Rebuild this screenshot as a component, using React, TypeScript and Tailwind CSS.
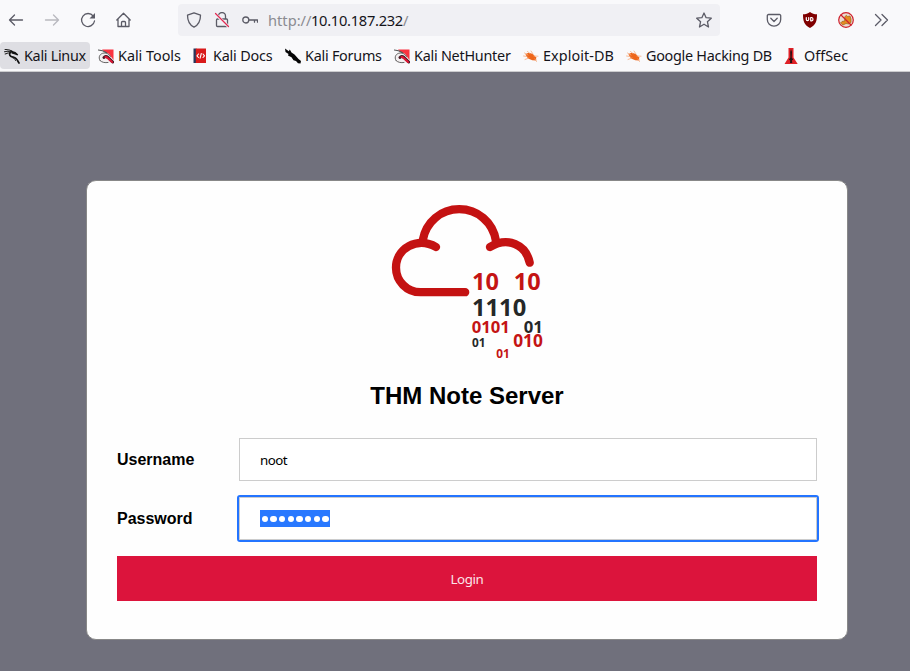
import React from "react";

const stroke = { fill: "none", stroke: "#5b5b66", strokeWidth: 1.3, strokeLinecap: "round", strokeLinejoin: "round" } as const;

function Icon({ children, className = "" }: { children: React.ReactNode; className?: string }) {
  return (
    <svg viewBox="0 0 16 16" className={`size-4 shrink-0 ${className}`} {...stroke}>
      {children}
    </svg>
  );
}

function DragonIcon() {
  return (
    <Icon>
      <path d="M1 1.500C4 1.200 6 1.800 8 3.300M.5 3.800C3 3 5 3.200 6.500 4M1.200 6c2-.8 3.500-1.200 5-1.200" stroke="#222" strokeWidth="1.1" />
      <path d="M7.500 3.500C5 5 5.200 7 6.800 8.200c1.700 1.200 4.200.8 5.700 2.800 1 1.200 1.500 2.500 2.500 4" stroke="#111" strokeWidth="1.700" />
      <path d="M9 10c1.500.3 2.200 1.200 2.500 2.500" stroke="#222" strokeWidth="1" />
      <path d="M7.500 2.800 11.500 4l2.700 2.500-.7 1L11 6.500 7.500 5.500Z" fill="#111" stroke="none" />
    </Icon>
  );
}

function ToolsIcon() {
  return (
    <Icon>
      <path d="M4 1.500h11.500V12L8 5Z" fill="#fa3340" stroke="none" />
      <path d="M1 8C3 4 8 3.500 11 6l4 5.500V15L4 15 1 12Z" fill="#f4f0f1" stroke="none" />
      <path d="M.3 2C3 2 6 3 8.500 4.800" stroke="#555" strokeWidth="1.100" />
      <path d="M2 12.500C-.2 9 2 5.500 6 5c3-.4 5 1.200 6.500 3.500M2 12.500c2 2 5 2.500 8 2" stroke="#555" strokeWidth=".9" />
      <path d="M6 9.500c1-1.500 2.500-1.200 4 0l4.700 4.500" stroke="#4a1824" strokeWidth="3" />
      <path d="M7.500 9c1 0 1.600.4 2.200 1l4.300 4" stroke="#df1735" strokeWidth="2" />
    </Icon>
  );
}

function DocsIcon() {
  return (
    <Icon>
      <path d="M.500.500h3v14.500h-3Z" fill="#26375d" stroke="none" />
      <path d="M2.800.5H13V15H2.800Z" fill="#d91b1b" stroke="none" />
      <path d="m5.500 6-1.500 1.800 1.500 1.700M10 6l1.500 1.800L10 9.500M8.300 5.500l-1.200 4.700" stroke="#fff" strokeWidth="1.100" />
    </Icon>
  );
}

function ForumsIcon() {
  return (
    <Icon>
      <path d="M0 .5 3.800 3.200 4.800 1.500 6.500 4.500 9.500 6.500 13.500 11l2.500 2-.5 2.500-2.500-.2-2-2.300-2.500-.8-2-3L3 7.500 3.500 6 .5 4Z" fill="#050505" stroke="none" />
    </Icon>
  );
}

function BugIcon() {
  return (
    <Icon>
      <path d="M2.500 6.500C4 4.500 7 4.500 10 6.200l3 3 .3 3.300-4-.2L5 10.500Z" fill="#ee6519" stroke="none" />
      <path d="M1.500 5 5 7M4.500 3.500 7 5.500M8 3l2 3M.5 8 4 8.500M2 11.500l4-1.500M11 8l4 .2M12 11l1.500 2.500" stroke="#f5ab7d" strokeWidth=".8" />
    </Icon>
  );
}

function OffSecIcon() {
  return (
    <Icon>
      <path d="M4.500 0h5v9.500L13.700 16H.5L4.500 9.500Z" fill="#df2026" stroke="none" />
      <path d="m7 1 1 3-.3 5.500 1.500 2-1.300 1L8.300 15H6l.2-2.500-1.300-1 1.500-2L6.200 4Z" fill="#241012" stroke="none" />
    </Icon>
  );
}

const bookmarks = [
  { label: "Kali Linux", icon: <DragonIcon />, width: "w-[62px] tracking-[-0.3px]", active: true },
  { label: "Kali Tools", icon: <ToolsIcon />, width: "w-[63px] tracking-[-0.03px]" },
  { label: "Kali Docs", icon: <DocsIcon />, width: "w-[60px] tracking-[-0.2px]" },
  { label: "Kali Forums", icon: <ForumsIcon />, width: "w-[77px] tracking-[-0.25px]" },
  { label: "Kali NetHunter", icon: <ToolsIcon />, width: "w-[97px] tracking-[-0.25px]" },
  { label: "Exploit-DB", icon: <BugIcon />, width: "w-[71px] tracking-[0.06px]" },
  { label: "Google Hacking DB", icon: <BugIcon />, width: "w-[126px] tracking-[-0.28px]" },
  { label: "OffSec", icon: <OffSecIcon />, width: "w-[44px]" },
];

function Toolbar() {
  return (
    <div className="flex h-10 items-center pl-2">
      <Icon><path d="M14.500 8H1.500M6.500 3 1.500 8l5 5" /></Icon>
      <Icon className="ml-5 opacity-40"><path d="M1.500 8h13M9.500 3l5 5-5 5" /></Icon>
      <Icon className="ml-5">
        <path d="M13.200 4A6.500 6.500 0 1 0 14.500 9" />
        <path d="M15 1v5.500H9.500Z" fill="#5b5b66" stroke="none" />
      </Icon>
      <Icon className="ml-5">
        <path d="M.8 8 7.500 1.200 14.200 8M2 7v7.500h11V7M5.500 14V10.500a1 1 0 0 1 1-1h2a1 1 0 0 1 1 1V14" />
      </Icon>
      <div className="ml-[46px] flex h-8 w-[542px] items-center rounded bg-[#f0f0f4] px-2">
        <Icon><path d="m8 .8 6.500 2.400c0 5.500-1.700 9.500-6.500 12C3.200 12.700 1.500 8.700 1.500 3.200Z" /></Icon>
        <Icon className="ml-3">
          <path d="M4.500 7V4a3.500 3.500 0 0 1 7 0v3M3.500 7h9a1 1 0 0 1 1 1v5.500a1 1 0 0 1-1 1h-9a1 1 0 0 1-1-1V8a1 1 0 0 1 1-1Z" />
          <path d="m1 1.500 14 13.500" stroke="#f0f0f4" strokeWidth="3" />
          <path d="m1.500 1.500 13 13" stroke="#e22850" strokeWidth="1.200" />
        </Icon>
        <Icon className="ml-3"><circle cx="3.800" cy="8" r="3" /><path d="M6.800 8h8.700v2.200M12.500 8v2.200" /></Icon>
        <div className="ml-2.5 flex text-[14.67px] leading-5">
          <span className="w-[43px] whitespace-nowrap text-[#8b8b91]">http://</span>
          <span className="tracking-[-0.28px] whitespace-nowrap text-[#15141a]">10.10.187.232<span className="text-[#8b8b91]">/</span></span>
        </div>
        <Icon className="ml-auto"><path d="m8 1 2.100 4.700 5.200.5-3.900 3.500L12.500 15 8 12.200 3.500 15l1.100-5.300L.7 6.200l5.200-.5Z" /></Icon>
      </div>
      <Icon className="ml-[46px]">
        <path d="M2.500 2.500h11a1.200 1.200 0 0 1 1.200 1.200V7.500a6.700 6.700 0 0 1-13.400 0V3.700A1.200 1.200 0 0 1 2.500 2.500ZM4.800 6.300 8 9.500l3.200-3.200" />
      </Icon>
      <Icon className="ml-5">
        <path d="M8 0c2 1.600 4.300 2.300 7 2.300C15 9 14 13 8 16 2 13 1 9 1 2.300 3.700 2.300 6 1.600 8 0Z" fill="#800000" stroke="none" />
        <path d="M4.300 5.500v2a1.200 1.200 0 0 0 2.400 0v-2M8.700 5.500h1a1.700 1.700 0 0 1 0 3.300h-1Z" stroke="#fff" strokeWidth="1.200" />
      </Icon>
      <Icon className="ml-5">
        <circle cx="8" cy="8" r="7.200" fill="#ecdcd2" stroke="none" />
        <path d="m7 4.500 1.500-1.200 1 1.200L12 4l1 3v3.500L11 12l-3-.5L5 13l-2.500-2L4 9.500 6.500 9Z" fill="#e58b20" stroke="#9a641d" strokeWidth=".7" />
        <circle cx="8" cy="8" r="7.300" stroke="#cf202c" strokeWidth="1.200" />
        <path d="m3 3 10 10" stroke="#cf202c" strokeWidth="1.200" />
      </Icon>
      <Icon className="ml-5"><path d="m1.500 2.500 5.500 5.500-5.500 5.500M8 2.500 13.500 8 8 13.500" /></Icon>
    </div>
  );
}

function CloudLogo() {
  return (
    <svg viewBox="387 200 160 162" className="mt-[19px] ml-[300px] h-[162px] w-40 shrink-0" fontFamily="Noto Sans, sans-serif" fontWeight="700" fill="#c41414">
      <g fill="none" stroke="#c41212" strokeWidth="8.3" strokeLinecap="round">
        <path d="M436 247C417 236 396 249 396 267.500A24.500 24.500 0 0 0 420.500 292.200H465.200" />
        <path d="M422.800 240C426 222 441 209.200 459.200 209.200S493 222 496 241" strokeLinecap="butt" />
        <path d="M490 247C508 236 526 245 529.700 262.700" />
      </g>
      <text x="472" y="289.700" fontSize="23.5">10</text>
      <text x="513.700" y="289.700" fontSize="23.5">10</text>
      <text x="472" y="315.600" fontSize="23.700" fill="#252828">1110</text>
      <text x="471.700" y="333.200" fontSize="16.700">0101</text>
      <text x="523.700" y="333.200" fontSize="16.700" fill="#252828">01</text>
      <text x="472" y="347.200" fontSize="11.800" fill="#252828">01</text>
      <text x="513.200" y="347.300" fontSize="17.300">010</text>
      <text x="496.200" y="358" fontSize="11.800">01</text>
    </svg>
  );
}

export default function App() {
  return (
    <div className="flex h-[671px] w-[910px] flex-col overflow-hidden bg-[#70707c] font-['Noto_Sans',sans-serif]">
      <header className="h-[72px] shrink-0 border-b border-[#cccccf] bg-[#f9f9fb]">
        <Toolbar />
        <nav className="flex gap-1 pt-0.5 text-[14.4px] text-[#15141a]">
          {bookmarks.map((b) => (
            <a key={b.label} className={`flex h-[27px] items-center gap-1 rounded px-1 ${b.active ? "bg-[#dedee3]" : ""}`}>
              {b.icon}
              <span className={`${b.width} pt-px leading-5 whitespace-nowrap`}>{b.label}</span>
            </a>
          ))}
        </nav>
      </header>
      <main className="mt-[108px] ml-[86px] flex h-[460px] w-[762px] flex-col rounded-[10px] border border-[#888888] bg-[#fefefe]">
        <CloudLogo />
        <h1 className="mt-5 text-center font-['Liberation_Sans',Arial,sans-serif] text-2xl leading-7 font-bold text-black">THM Note Server</h1>
        <form className="mt-7 px-[30px] text-[13.33px]">
          <div className="flex h-[43px] items-center">
            <label className="w-[122px] font-['Liberation_Sans',Arial,sans-serif] text-base font-bold">Username</label>
            <div className="flex h-[43px] w-[578px] items-center border border-[#cccccc] bg-white px-5 pt-0.5 tracking-[-0.5px]">noot</div>
          </div>
          <div className="mt-4 flex h-[43px] items-center">
            <label className="w-[122px] font-['Liberation_Sans',Arial,sans-serif] text-base font-bold">Password</label>
            <div className="flex h-[43px] w-[578px] items-center rounded-[1px] border border-[#cccccc] bg-white px-5 outline-2 outline-[#2374ff]">
              <span className="flex h-[17px] w-[70px] items-center gap-[2.2px] bg-[#2878ff] pt-px pl-[1.500px]">
                {Array.from({ length: 8 }, (_, i) => <i key={i} className="size-[6.5px] shrink-0 rounded-full bg-white" />)}
              </span>
            </div>
          </div>
          <button type="button" className="mt-4 h-[45px] w-full bg-[#dc143c] pt-0.5 tracking-[-0.4px] text-[#fbe4e9]">Login</button>
        </form>
      </main>
    </div>
  );
}
